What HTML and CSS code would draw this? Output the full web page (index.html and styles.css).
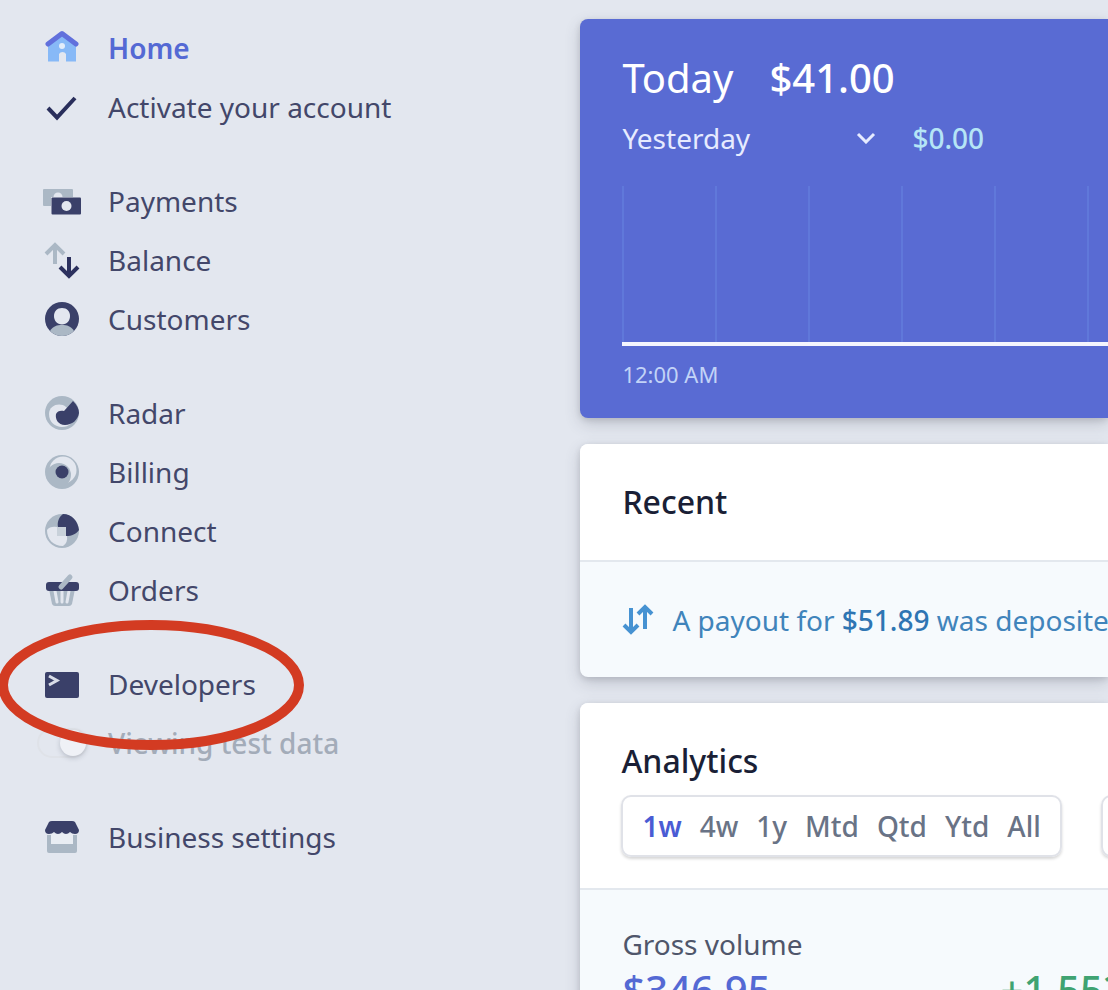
FILE: index.html
```html
<!DOCTYPE html>
<html lang="en">

<head>
    <meta charset="utf-8">
    <title>Dashboard</title>
    <link rel="stylesheet" href="styles.css">
</head>

<body>
    <div class="page">
        <nav class="sidebar">
            <ul class="nav_group">
                <li><a href="#" class="nav_item active">
                    <svg class="icon" viewBox="0 0 40 40">
                        <path d="M6 15L20 4l14 11v18.500H24V26a4 4 0 0 0-7 0v7.500H6z" fill="#87b9f7" />
                        <circle cx="20" cy="18" r="3" fill="#e3edfa" />
                        <path d="M6 16L20 5.500 34 16" fill="none" stroke="#6170dc" stroke-width="5" stroke-linecap="round" stroke-linejoin="round" />
                    </svg>
                    Home</a></li>
                <li><a href="#" class="nav_item">
                    <svg class="icon" viewBox="0 0 40 40">
                        <path d="M6 21l9 9.500L33 11" fill="none" stroke="#292e5b" stroke-width="4" />
                    </svg>
                    Activate your account</a></li>
            </ul>
            <ul class="nav_group">
                <li><a href="#" class="nav_item">
                    <svg class="icon" viewBox="0 0 40 40">
                        <rect x="1" y="8" width="30" height="17" rx="1" fill="#abb8c5" />
                        <circle cx="16" cy="16" r="4.500" fill="#e3e7ef" />
                        <rect x="9" y="16" width="30" height="18" fill="#e3e7ef" />
                        <rect x="9.500" y="16.500" width="29.500" height="17" rx="1" fill="#3a4069" />
                        <circle cx="24.500" cy="25" r="5" fill="#e3e7ef" />
                    </svg>
                    Payments</a></li>
                <li><a href="#" class="nav_item">
                    <svg class="icon" viewBox="0 0 40 40" fill="none" stroke-width="4">
                        <path d="M13 24V6M4 14l9-9 9 9" stroke="#abb8c5" />
                        <path d="M27 17v19M18 27l9 9 9-9" stroke="#2c315e" />
                    </svg>
                    Balance</a></li>
                <li><a href="#" class="nav_item">
                    <svg class="icon" viewBox="0 0 40 40">
                        <circle cx="20" cy="20" r="17" fill="#3a4069" />
                        <path d="M8 32c3-5 7-6 12-6s9 1 12 6a17 17 0 0 1-24 0z" fill="#abb8c5" />
                        <path d="M20 9c5 0 8 3.500 8 8s-3 8.500-8 8.500-8-4-8-8.500 3-8 8-8z" fill="#e3e7ef" />
                    </svg>
                    Customers</a></li>
            </ul>
            <ul class="nav_group">
                <li><a href="#" class="nav_item">
                    <svg class="icon" viewBox="0 0 40 40">
                        <circle cx="20" cy="20" r="17" fill="#abb8c5" />
                        <path d="M24 14c-6-5-17-2-17 7 0 8 6 13 13 13 7 0 12-5 14-11z" fill="#e3e7ef" />
                        <path d="M31 8c4 4 6 8 6 12-1 7-7 12-14 12-7 0-10-6-9-11 1-3 5-4 8-3z" fill="#3a4069" />
                    </svg>
                    Radar</a></li>
                <li><a href="#" class="nav_item">
                    <svg class="icon" viewBox="0 0 40 40">
                        <circle cx="20" cy="20" r="17" fill="#abb8c5" />
                        <circle cx="21" cy="18" r="13.500" fill="#e3e7ef" />
                        <circle cx="17" cy="23" r="12" fill="#abb8c5" />
                        <circle cx="20" cy="20" r="6.500" fill="#3a4069" />
                    </svg>
                    Billing</a></li>
                <li><a href="#" class="nav_item">
                    <svg class="icon" viewBox="0 0 40 40">
                        <circle cx="20" cy="20" r="17" fill="#abb8c5" />
                        <path d="M5 19q3-4 10-3v9h10q1 7-4 10C11 35 5 28 5 19z" fill="#e3e7ef" />
                        <path d="M16 16c-1-5 1-10 5-13 9 0 15 7 16 16-3 4-7 6-13 6v-9z" fill="#3a4069" />
                        <path d="M15 16h9v9h-9z" fill="#c8d1da" />
                    </svg>
                    Connect</a></li>
                <li><a href="#" class="nav_item">
                    <svg class="icon" viewBox="0 0 40 40">
                        <path d="M7 19h26l-3 15q-1 2-3 2H13q-2 0-3-2z" fill="#abb8c5" />
                        <path d="M13 21l2 11M20 21v11M27 21l-2 11" stroke="#e3e7ef" stroke-width="3" stroke-linecap="round" />
                        <rect x="4" y="12" width="33" height="9" rx="3" fill="#3a4069" />
                        <path d="M19 17L28 7" stroke="#abb8c5" stroke-width="5" stroke-linecap="round" />
                    </svg>
                    Orders</a></li>
            </ul>
            <ul class="nav_group">
                <li><a href="#" class="nav_item">
                    <svg class="icon" viewBox="0 0 40 40">
                        <rect x="3" y="8" width="34" height="26" rx="2" fill="#3a4069" />
                        <path d="M7 12l8 4.500L7 21" fill="none" stroke="#d9dde8" stroke-width="3" />
                    </svg>
                    Developers</a></li>
                <li class="nav_item test_data">
                    <input type="checkbox" id="test_mode" class="toggle" checked disabled>
                    <label for="test_mode">Viewing test data</label>
                </li>
            </ul>
            <ul class="nav_group">
                <li><a href="#" class="nav_item">
                    <svg class="icon" viewBox="0 0 40 40">
                        <path d="M5 18h30v16q0 2-2 2H7q-2 0-2-2z" fill="#abb8c5" />
                        <path d="M9 17h22v10H9z" fill="#e9edf3" />
                        <path d="M7 5q1-1 3-1h20q2 0 3 1l4 8q0 4-4 4-3 0-5-2-2 2-4 2t-4-2q-2 2-4 2t-4-2q-2 2-5 2-4 0-4-4z" fill="#3a4069" />
                    </svg>
                    Business settings</a></li>
            </ul>
            <!-- ring around the Developers link -->
            <svg class="ring" viewBox="0 0 306 130">
                <ellipse cx="153" cy="65" rx="148" ry="60" fill="none" stroke="#d33b22" stroke-width="10" />
            </svg>
        </nav>

        <main class="content">
            <section class="card today">
                <div class="today_row">
                    <h1>Today</h1>
                    <span class="amount">$41.00</span>
                </div>
                <div class="compare_row">
                    <div class="compare">
                        <select class="period" aria-label="Compare with">
                            <option>Yesterday</option>
                        </select>
                        <svg class="chevron" viewBox="0 0 20 12">
                            <path d="M2 2l8 8 8-8" fill="none" stroke="#e6ebff" stroke-width="3" />
                        </svg>
                    </div>
                    <span class="compare_amount">$0.00</span>
                </div>
                <div class="chart">
                    <i></i><i></i><i></i><i></i><i></i><i></i>
                </div>
                <p class="chart_label">12:00 AM</p>
            </section>

            <section class="card">
                <header class="card_header">
                    <h2>Recent</h2>
                </header>
                <a href="#" class="payout">
                    <svg class="payout_icon" viewBox="0 0 32 32" fill="none" stroke="#4692d2" stroke-width="4">
                        <path d="M9 4v24M2 21l7 7 7-7" />
                        <path d="M23 25V3M16 10l7-7 7 7" />
                    </svg>
                    <span>A payout for <b>$51.89</b> was deposited</span>
                </a>
            </section>

            <section class="card">
                <header class="card_header analytics_header">
                    <h2>Analytics</h2>
                    <div class="filters">
                        <div class="ranges">
                            <button type="button" class="selected">1w</button>
                            <button type="button">4w</button>
                            <button type="button">1y</button>
                            <button type="button">Mtd</button>
                            <button type="button">Qtd</button>
                            <button type="button">Ytd</button>
                            <button type="button">All</button>
                        </div>
                        <div class="ranges"></div>
                    </div>
                </header>
                <div class="volume">
                    <h3>Gross volume</h3>
                    <div class="volume_row">
                        <span class="total">$346.95</span>
                        <span class="change">+1,553%</span>
                    </div>
                </div>
            </section>
        </main>
    </div>
</body>

</html>
```
FILE: styles.css
```css
* {
    box-sizing: border-box;
}

body {
    margin: 0;
    font-family: "Noto Sans", "Open Sans", sans-serif;
    font-size: 28px;
    line-height: 40px;
    color: #3c4257;
    background-color: #e3e7ef;
}

h1, h2, h3, p, ul {
    margin: 0;
    padding: 0;
    font-weight: 400;
}

a {
    text-decoration: none;
}

.page {
    display: grid;
    grid-template-columns: 11fr 10fr;
    height: 100vh;
    overflow: hidden;
}

/* sidebar */
.sidebar {
    position: relative;
    padding-top: 18px;
}

.nav_group {
    list-style: none;
    margin-bottom: 35px;
}

.nav_item {
    display: flex;
    align-items: center;
    gap: 26px;
    height: 59px;
    padding-left: 42px;
    color: #43476a;
}

.nav_item.active {
    color: #5469d4;
    font-weight: 600;
}

.icon {
    width: 40px;
    height: 40px;
}

.test_data {
    gap: 20px;
    padding-left: 37px;
    color: #a3acb9;
    font-weight: 500;
}

.toggle {
    appearance: none;
    display: flex;
    align-items: center;
    justify-content: flex-end;
    width: 51px;
    height: 30px;
    margin: 0;
    border: 2px solid #dfe2e8;
    border-radius: 15px;
}

.toggle::before {
    content: "";
    width: 26px;
    height: 26px;
    border-radius: 50%;
    background-color: #eff1f6;
    box-shadow: 0 2px 5px rgba(60, 66, 87, 0.25);
}

.ring {
    position: absolute;
    top: 620px;
    left: -2px;
    width: 306px;
    height: 130px;
    pointer-events: none;
}

/* cards */
.content {
    display: flex;
    flex-direction: column;
    gap: 26px;
    min-width: 0;
    padding-top: 19px;
}

.card {
    flex: none;
    white-space: nowrap;
    background-color: #f6fafd;
    border-radius: 8px 0 0 8px;
    box-shadow: 0 6px 16px rgba(60, 66, 87, 0.2), 0 2px 6px rgba(0, 0, 0, 0.12);
}

.card_header {
    padding: 38px 42px;
    background-color: #fff;
    border-bottom: 2px solid #e3e8ee;
    border-radius: 8px 0 0 0;
}

h2 {
    font-size: 32px;
    font-weight: 500;
    color: #1a1f36;
}

.today {
    padding: 35px 0 24px 42px;
    color: #fff;
    background-color: #596bd3;
}

.today h1,
.amount,
.total,
.change {
    font-size: 40px;
    line-height: 48px;
}

.today_row {
    display: flex;
    gap: 36px;
}

.amount {
    font-weight: 500;
}

.compare_row {
    display: flex;
    gap: 34px;
    margin-top: 16px;
}

/* the select fills the box, the arrow lies over its right end */
.compare {
    display: flex;
    align-items: center;
    position: relative;
    width: 256px;
}

.period {
    appearance: none;
    width: 100%;
    padding: 0;
    border: 0;
    font: inherit;
    color: #e6ebff;
    background: none;
}

.chevron {
    position: absolute;
    right: 2px;
    width: 20px;
    height: 12px;
}

.compare_amount {
    color: #b5e5f6;
    font-weight: 500;
}

.chart {
    display: flex;
    height: 160px;
    margin-top: 28px;
    overflow: hidden;
    border-bottom: 4px solid #f4f5fe;
}

.chart i {
    flex: none;
    width: 93px;
    border-left: 2px solid #6078da;
}

.chart_label {
    margin-top: 8px;
    font-size: 22px;
    color: #c2d3f7;
}

.payout {
    display: flex;
    align-items: center;
    gap: 18px;
    height: 115px;
    padding-left: 42px;
    overflow: hidden;
    color: #4084bb;
}

.payout b {
    font-weight: 500;
    color: #2e75b3;
}

.payout_icon {
    flex: none;
    width: 32px;
    height: 32px;
}

/* analytics */
.analytics_header {
    padding: 38px 0 31px 41px;
    overflow: hidden;
}

.filters {
    display: flex;
    gap: 39px;
    margin-top: 14px;
}

.ranges {
    display: flex;
    flex: none;
    align-items: center;
    justify-content: space-between;
    gap: 18px;
    height: 62px;
    padding: 0 19px;
    border: 2px solid #e0e2e8;
    border-radius: 10px;
    box-shadow: 0 2px 3px rgba(0, 0, 0, 0.16);
}

.ranges button {
    padding: 0;
    border: 0;
    font: inherit;
    font-weight: 500;
    color: #697386;
    background: none;
    cursor: pointer;
}

.ranges .selected {
    color: #4a5bd4;
    font-weight: 600;
}

.volume {
    padding: 34px 0 40px 42px;
    overflow: hidden;
}

h3 {
    font-size: 28px;
    color: #4f566b;
}

.volume_row {
    display: flex;
    gap: 230px;
    margin-top: 2px;
}

.total {
    color: #5469d4;
    font-weight: 500;
}

.change {
    color: #3fa372;
    font-weight: 500;
}
```
